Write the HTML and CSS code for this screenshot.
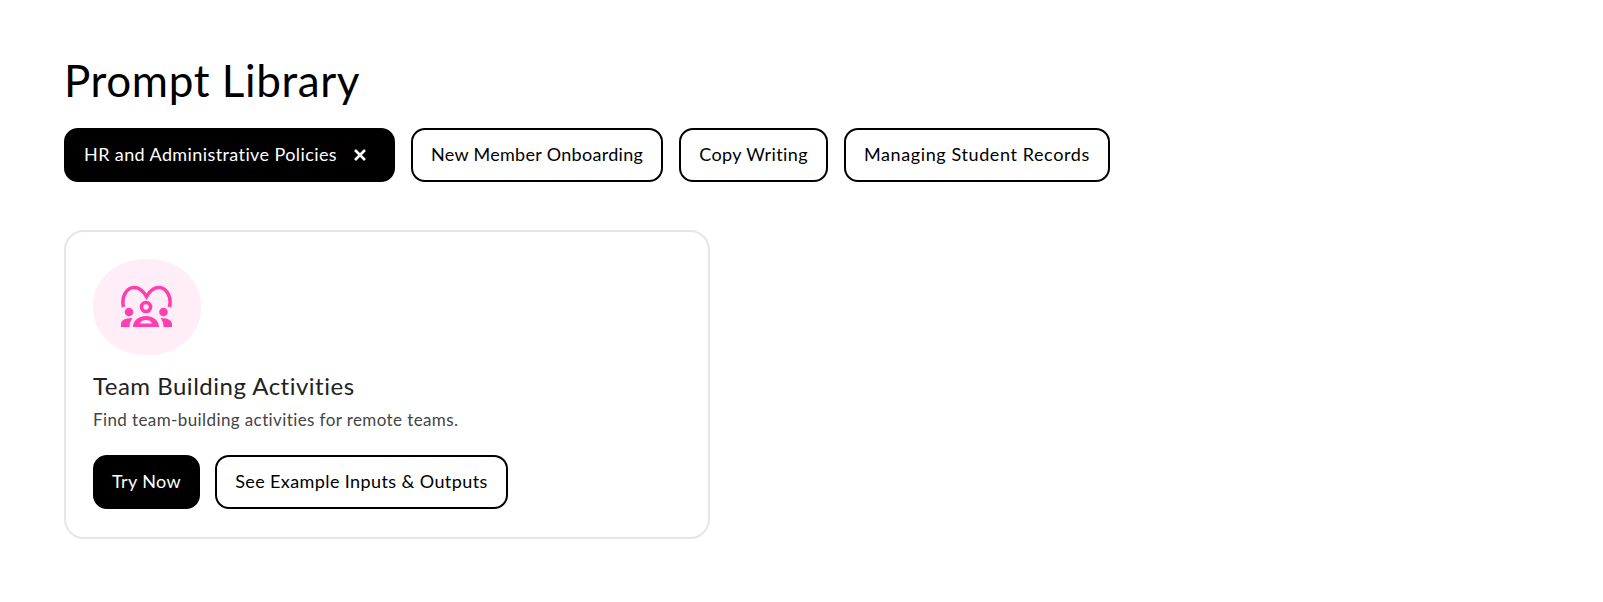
FILE: index.html
```html
<!DOCTYPE html>
<html lang="en">
<head>
    <meta charset="UTF-8">
    <title>Prompt Library</title>
    <link rel="stylesheet" href="styles.css">
</head>
<body>
    <main class="library">
        <h1>Prompt Library</h1>

        <!-- Filtres -->
        <div class="filters">
            <button class="btn btn-dark">
                HR and Administrative Policies
                <svg class="close" viewBox="0 0 14 14" width="14" height="14"><path d="M2 2l10 10M12 2L2 12"/></svg>
            </button>
            <button class="btn btn-tight">New Member Onboarding</button>
            <button class="btn">Copy Writing</button>
            <button class="btn btn-wide">Managing Student Records</button>
        </div>

        <!-- Carte -->
        <div class="card">
            <div class="icon-blob">
                <svg viewBox="0 0 54 44" width="54" height="44">
                    <path class="heart" d="M3.500 22C1 11 7 2.500 14 2.500c5.500 0 9 3 12.500 9 3.500-6 7-9 12.500-9 7 0 13 8.500 10.500 19.500"/>
                    <circle class="dot" cx="9" cy="27" r="4.300"/>
                    <circle class="dot" cx="43.500" cy="27" r="4.300"/>
                    <circle class="ring" cx="26" cy="22" r="4.500"/>
                    <path class="dot" d="M1 42v-3c0-3 3-6 11.500-6-2 2.500-3 5.500-3 9zM52 42v-3c0-3-3-6-11.500-6 2 2.500 3 5.500 3 9z"/>
                    <path class="dot" fill-rule="evenodd" d="M13 42c0-6 5-11 13-11s13 5 13 11zM20 38.500h12c-1-2.500-3-3.500-6-3.500s-5 1-6 3.500z"/>
                </svg>
            </div>
            <h3>Team Building Activities</h3>
            <p>Find team-building activities for remote teams.</p>
            <div class="actions">
                <button class="btn btn-dark">Try Now</button>
                <button class="btn">See Example Inputs &amp; Outputs</button>
            </div>
        </div>
    </main>
</body>
</html>
```

FILE: styles.css
```css
body {
    margin: 0;
    background-color: white;
    color: black;
    font-family: Lato, "Open Sans", sans-serif;
}

.library {
    padding: 55px 64px 0;
}

h1 {
    margin: 0 0 23px;
    font-size: 44px;
    line-height: 50px;
    font-weight: 400;
    letter-spacing: 0.6px;
}

.filters {
    display: flex;
    gap: 16px;
    margin-bottom: 48px;
}

.btn {
    display: flex;
    align-items: center;
    height: 54px;
    padding: 0 18px 3px;
    border: 2px solid black;
    border-radius: 14px;
    background-color: white;
    color: black;
    font-family: inherit;
    font-size: 18px;
    letter-spacing: 0.4px;
    cursor: pointer;
}

.btn-dark {
    background-color: black;
    color: white;
}

.btn-tight {
    letter-spacing: 0.3px;
}

.btn-wide {
    letter-spacing: 0.6px;
}

.close {
    margin-left: 16px;
    margin-right: 8px;
    margin-top: 3px;
    fill: none;
    stroke: white;
    stroke-width: 2.600;
}

.card {
    width: 646px;
    height: 309px;
    padding: 27px 27px 0;
    box-sizing: border-box;
    border: 2px solid #e6e6e6;
    border-radius: 20px;
}

.icon-blob {
    display: flex;
    justify-content: center;
    align-items: center;
    width: 108px;
    height: 96px;
    background-color: #ffedf8;
    border-radius: 48%;
}

.heart, .ring {
    fill: none;
    stroke: #ff3eb0;
    stroke-width: 3.600;
}

.dot {
    fill: #ff3eb0;
}

h3 {
    margin: 16px 0 7px;
    font-size: 24px;
    line-height: 30px;
    font-weight: 400;
    color: #222;
    letter-spacing: 0.5px;
}

.card p {
    margin: 0 0 23px;
    font-size: 17px;
    line-height: 24px;
    color: #444;
    letter-spacing: 0.4px;
}

.actions {
    display: flex;
    gap: 15px;
}

.actions .btn-dark {
    padding: 0 17px 3px;
}
```
